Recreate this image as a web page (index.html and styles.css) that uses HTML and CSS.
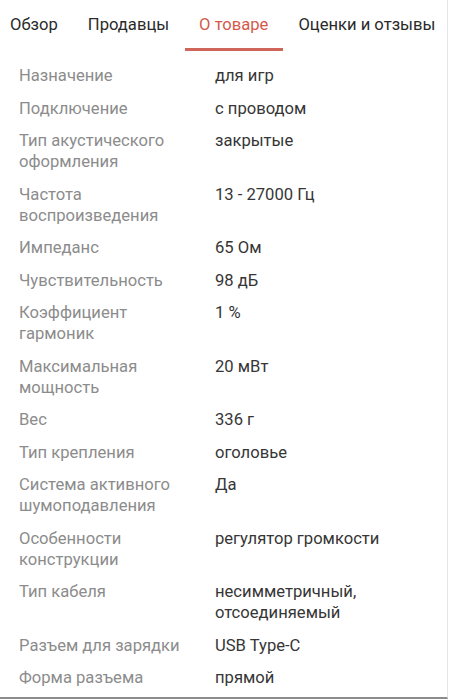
FILE: index.html
```html
<!DOCTYPE html>
<html lang="ru">
<head>
<meta charset="utf-8">
<link rel="stylesheet" href="styles.css">
</head>
<body>
<div class="screen">
  <nav class="tabs">
    <div class="tab">Обзор</div>
    <div class="tab">Продавцы</div>
    <div class="tab active">О товаре</div>
    <div class="tab">Оценки и отзывы</div>
  </nav>
  <div class="specs">
    <div class="row"><div class="k">Назначение</div><div class="v">для игр</div></div>
    <div class="row"><div class="k">Подключение</div><div class="v">с проводом</div></div>
    <div class="row"><div class="k">Тип акустического оформления</div><div class="v">закрытые</div></div>
    <div class="row"><div class="k">Частота воспроизведения</div><div class="v">13 - 27000 Гц</div></div>
    <div class="row"><div class="k">Импеданс</div><div class="v">65 Ом</div></div>
    <div class="row"><div class="k">Чувствительность</div><div class="v">98 дБ</div></div>
    <div class="row"><div class="k">Коэффициент гармоник</div><div class="v">1 %</div></div>
    <div class="row"><div class="k">Максимальная мощность</div><div class="v">20 мВт</div></div>
    <div class="row"><div class="k">Вес</div><div class="v">336 г</div></div>
    <div class="row"><div class="k">Тип крепления</div><div class="v">оголовье</div></div>
    <div class="row"><div class="k">Система активного шумоподавления</div><div class="v">Да</div></div>
    <div class="row"><div class="k">Особенности конструкции</div><div class="v">регулятор громкости</div></div>
    <div class="row"><div class="k">Тип кабеля</div><div class="v">несимметричный, отсоединяемый</div></div>
    <div class="row"><div class="k">Разъем для зарядки</div><div class="v">USB Type-C</div></div>
    <div class="row"><div class="k">Форма разъема</div><div class="v">прямой</div></div>
  </div>
</div>
</body>
</html>
```
FILE: styles.css
```css
html, body {
  margin: 0;
  padding: 0;
  background: #fff;
}
body {
  font-family: Roboto, "Noto Sans", sans-serif;
  overflow: hidden;
}
.screen {
  width: 447px;
  height: 697px;
  border-right: 1px solid #e4e4e4;
  border-bottom: 2px solid #8c8c8c;
  overflow: hidden;
  position: relative;
}
.tabs {
  display: flex;
  padding-left: 10px;
  gap: 30px;
  height: 51px;
  align-items: flex-start;
}
.tab {
  font-size: 16.6px;
  color: #2a2a2a;
  line-height: 20px;
  padding-top: 15px;
  white-space: nowrap;
  position: relative;
  height: 36px;
}
.tab.active {
  color: #d45a4c;
}
.tab.active::after {
  content: "";
  position: absolute;
  left: -14px;
  right: -15px;
  bottom: 0;
  height: 3px;
  background: #d0665a;
}
.specs {
  display: flex;
  flex-direction: column;
  gap: 11.5px;
  padding: 14px 19px 0 19px;
}
.row {
  display: flex;
  font-size: 16.6px;
  line-height: 21px;
}
.k {
  width: 196px;
  flex: none;
  color: #8c8c8c;
  padding-right: 20px;
  box-sizing: border-box;
}
.v {
  color: #363636;
  width: 170px;
}
```
